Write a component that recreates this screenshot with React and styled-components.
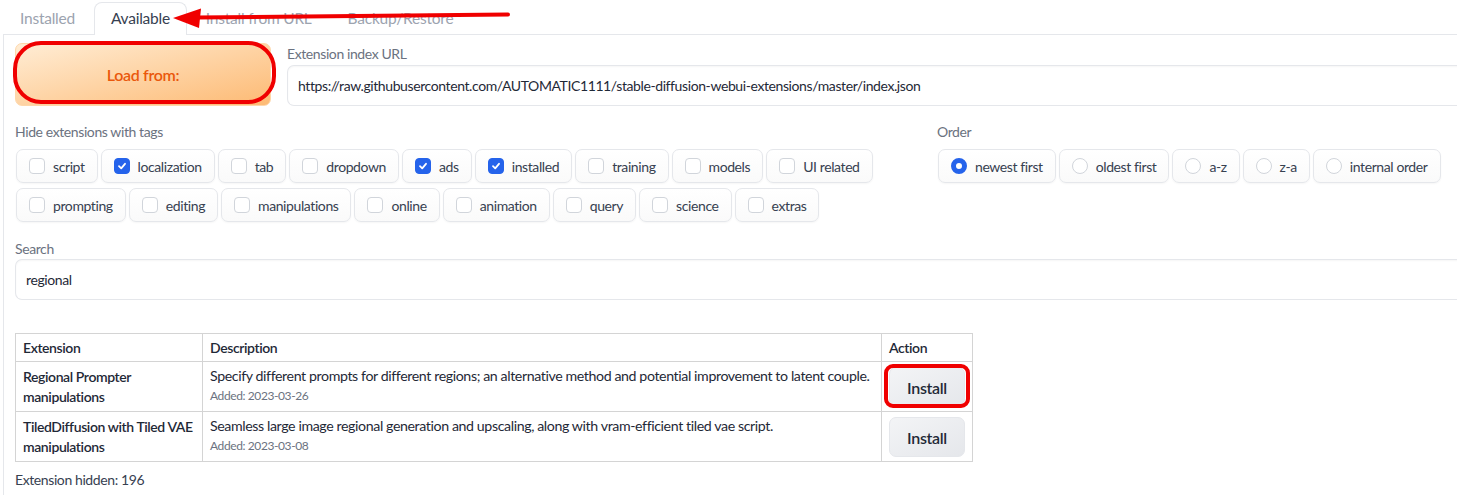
import React from "react";
import styled, { createGlobalStyle } from "styled-components";

const Global = createGlobalStyle`
  html, body { margin: 0; padding: 0; background: #fff; overflow: hidden; }
  body { font-family: "Source Sans Pro", Lato, "Liberation Sans", sans-serif; color: #1f2937; letter-spacing: -0.025em; }
  * { box-sizing: border-box; }
`;

const Page = styled.div`
  position: relative;
  width: 1900px;
  padding: 2px 0 0 3px;
`;

const TabBar = styled.div`
  display: flex;
  height: 32px;
  align-items: stretch;
  position: relative;
  z-index: 1;
`;

const Tab = styled.div`
  padding: 0 16px 2px;
  margin-right: 2px;
  font-size: 15.5px;
  letter-spacing: -0.015em;
  display: flex;
  align-items: center;
  color: ${(p) => (p.$active ? "#374151" : "#9ca3af")};
  background: ${(p) => (p.$active ? "#fff" : "transparent")};
  border: 1px solid ${(p) => (p.$active ? "#e5e7eb" : "transparent")};
  border-bottom: none;
  border-radius: 8px 8px 0 0;
  margin-bottom: -1px;
`;

const Panel = styled.div`
  border: 1px solid #e5e7eb;
  border-right: none;
  border-bottom: none;
  padding: 8px 12px 40px 11px;
  display: flex;
  flex-direction: column;
`;

const TopRow = styled.div`
  display: flex;
  gap: 16px;
  align-items: flex-start;
`;

const LoadButton = styled.button`
  position: relative;
  width: 256px;
  height: 63px;
  flex: none;
  border: 1px solid #fed7aa;
  border-radius: 7px;
  background: linear-gradient(to bottom right, #ffedd5, #fdba74);
  color: #ea580c;
  font-family: inherit;
  letter-spacing: -0.02em;
  font-size: 16px;
  font-weight: 600;
  margin-top: 0;
`;

const Field = styled.div`
  display: flex;
  flex-direction: column;
  flex: 1;
`;

const Label = styled.div`
  font-size: 14px;
  color: #6b7280;
  height: ${(p) => p.$h || 22}px;
  line-height: ${(p) => p.$h || 22}px;
`;

const TextBox = styled.div`
  height: 41px;
  border: 1px solid #e5e7eb;
  border-right: none;
  border-radius: 7px 0 0 7px;
  box-shadow: inset 0 1px 2px rgba(0, 0, 0, 0.04);
  display: flex;
  align-items: center;
  padding-left: 10px;
  font-size: 14px;
  color: #1f2937;
`;

const FiltersRow = styled.div`
  display: flex;
  gap: 16px;
  margin-top: 16px;
`;

const TagsCol = styled.div`
  width: 906px;
  flex: none;
`;

const OrderCol = styled.div`
  flex: 1;
`;

const ChoiceWrap = styled.div`
  display: flex;
  flex-wrap: wrap;
  gap: 5px 3px;
  margin-top: 7px;
  padding-left: 1px;
`;

const Choice = styled.label`
  display: flex;
  align-items: center;
  height: 34px;
  padding: 0 12px;
  gap: 8px;
  border: 1px solid #e5e7eb;
  border-radius: 7px;
  background: linear-gradient(to bottom, #fff, #fafafa);
  box-shadow: 0 1px 2px rgba(0, 0, 0, 0.04);
  font-size: 14px;
  color: #374151;
`;

const Box = styled.span`
  width: 16px;
  height: 16px;
  flex: none;
  border-radius: 4px;
  border: 1px solid ${(p) => (p.$on ? "#2563eb" : "#d1d5db")};
  background: ${(p) => (p.$on ? "#2563eb" : "#fff")};
  display: flex;
  align-items: center;
  justify-content: center;
`;

const Dot = styled.span`
  width: 16px;
  height: 16px;
  flex: none;
  border-radius: 50%;
  border: ${(p) => (p.$on ? "5px solid #2563eb" : "1px solid #d1d5db")};
  background: #fff;
`;

const SearchBlock = styled.div`
  margin-top: 17px;
`;

const Table = styled.table`
  margin-top: 33px;
  border-collapse: collapse;
  table-layout: fixed;
  width: 957px;
  font-size: 14px;
  td, th {
    border: 1px solid #d4d4d4;
    text-align: left;
    vertical-align: top;
    padding: 0 7px;
    white-space: nowrap;
  }
`;

const Col = styled.col`
  width: ${(p) => p.$w}px;
`;

const HeadCell = styled.th`
  height: 28px;
  font-weight: 600;
  vertical-align: middle !important;
  color: #1f2937;
`;

const NameCell = styled.td`
  font-weight: 600;
  padding-top: 5px !important;
  line-height: 20px;
`;

const Tag = styled.div`
  font-size: 14px;
`;

const DescCell = styled.td`
  padding-top: 4px !important;
  line-height: 20px;
  font-size: 14.2px;
  color: #1f2937;
`;

const Added = styled.div`
  font-size: 12px;
  color: #6b7280;
`;

const ActionCell = styled.td`
  padding: 5px 7px 4px !important;
  height: 50px;
`;

const InstallButton = styled.button`
  position: relative;
  width: 76px;
  height: 40px;
  border: 1px solid #e5e7eb;
  border-radius: 7px;
  background: linear-gradient(to bottom right, #f3f4f6, #e5e7eb);
  font-family: inherit;
  letter-spacing: -0.02em;
  font-size: 16px;
  font-weight: 600;
  color: #1f2937;
  display: block;
`;

const Highlight = styled.span`
  position: absolute;
  inset: ${(p) => p.$inset};
  border: ${(p) => p.$w || 4}px solid #f00000;
  border-radius: ${(p) => p.$r}px;
  pointer-events: none;
`;

const Footer = styled.div`
  margin-top: 9px;
  font-size: 14px;
  color: #374151;
`;

const Arrow = styled.svg`
  position: absolute;
  left: 0;
  top: 0;
  z-index: 5;
  pointer-events: none;
`;

const Check = () => (
  <svg width="10" height="10" viewBox="0 0 10 10">
    <path d="M2 5.2 L4.2 7.3 L8 2.8" fill="none" stroke="#fff" strokeWidth="1.8" strokeLinecap="round" strokeLinejoin="round" />
  </svg>
);

const tags1 = [
  ["script", false], ["localization", true], ["tab", false], ["dropdown", false], ["ads", true],
  ["installed", true], ["training", false], ["models", false], ["UI related", false],
  ["prompting", false], ["editing", false], ["manipulations", false], ["online", false],
  ["animation", false], ["query", false], ["science", false], ["extras", false],
];

const orders = [["newest first", true], ["oldest first", false], ["a-z", false], ["z-a", false], ["internal order", false]];

const rows = [
  {
    name: "Regional Prompter",
    tag: "manipulations",
    desc: "Specify different prompts for different regions; an alternative method and potential improvement to latent couple.",
    added: "Added: 2023-03-26",
    hl: true,
  },
  {
    name: "TiledDiffusion with Tiled VAE",
    tag: "manipulations",
    desc: "Seamless large image regional generation and upscaling, along with vram-efficient tiled vae script.",
    added: "Added: 2023-03-08",
    hl: false,
  },
];

export default function App() {
  return (
    <Page>
      <Global />
      <TabBar>
        <Tab>Installed</Tab>
        <Tab $active>Available</Tab>
        <Tab>Install from URL</Tab>
        <Tab>Backup/Restore</Tab>
      </TabBar>
      <Panel>
        <TopRow>
          <LoadButton>
            Load from:
            <Highlight $inset="-3px -6px 1px -3px" $r={28} $w={4.5} />
          </LoadButton>
          <Field>
            <Label>Extension index URL</Label>
            <TextBox>https://raw.githubusercontent.com/AUTOMATIC1111/stable-diffusion-webui-extensions/master/index.json</TextBox>
          </Field>
        </TopRow>
        <FiltersRow>
          <TagsCol>
            <Label $h={20}>Hide extensions with tags</Label>
            <ChoiceWrap>
              {tags1.map(([t, on]) => (
                <Choice key={t}>
                  <Box $on={on}>{on && <Check />}</Box>
                  {t}
                </Choice>
              ))}
            </ChoiceWrap>
          </TagsCol>
          <OrderCol>
            <Label $h={20}>Order</Label>
            <ChoiceWrap>
              {orders.map(([t, on]) => (
                <Choice key={t}>
                  <Dot $on={on} />
                  {t}
                </Choice>
              ))}
            </ChoiceWrap>
          </OrderCol>
        </FiltersRow>
        <SearchBlock>
          <Label $h={20}>Search</Label>
          <TextBox>regional</TextBox>
        </SearchBlock>
        <Table>
          <colgroup>
            <Col $w={187} />
            <Col $w={679} />
            <Col $w={91} />
          </colgroup>
          <thead>
            <tr>
              <HeadCell>Extension</HeadCell>
              <HeadCell>Description</HeadCell>
              <HeadCell>Action</HeadCell>
            </tr>
          </thead>
          <tbody>
            {rows.map((r) => (
              <tr key={r.name}>
                <NameCell>
                  {r.name}
                  <Tag>{r.tag}</Tag>
                </NameCell>
                <DescCell>
                  {r.desc}
                  <Added>{r.added}</Added>
                </DescCell>
                <ActionCell>
                  <InstallButton>
                    Install
                    {r.hl && <Highlight $inset="-4px -6px -2px -6px" $r={9} $w={4} />}
                  </InstallButton>
                </ActionCell>
              </tr>
            ))}
          </tbody>
        </Table>
        <Footer>Extension hidden: 196</Footer>
      </Panel>
      <Arrow width="520" height="40" viewBox="0 0 520 40">
        <path d="M508 14.5 L196 17.5" stroke="#f00000" strokeWidth="4" strokeLinecap="round" />
        <path d="M173 18 L201 8.5 L199 28 Z" fill="#f00000" />
      </Arrow>
    </Page>
  );
}
